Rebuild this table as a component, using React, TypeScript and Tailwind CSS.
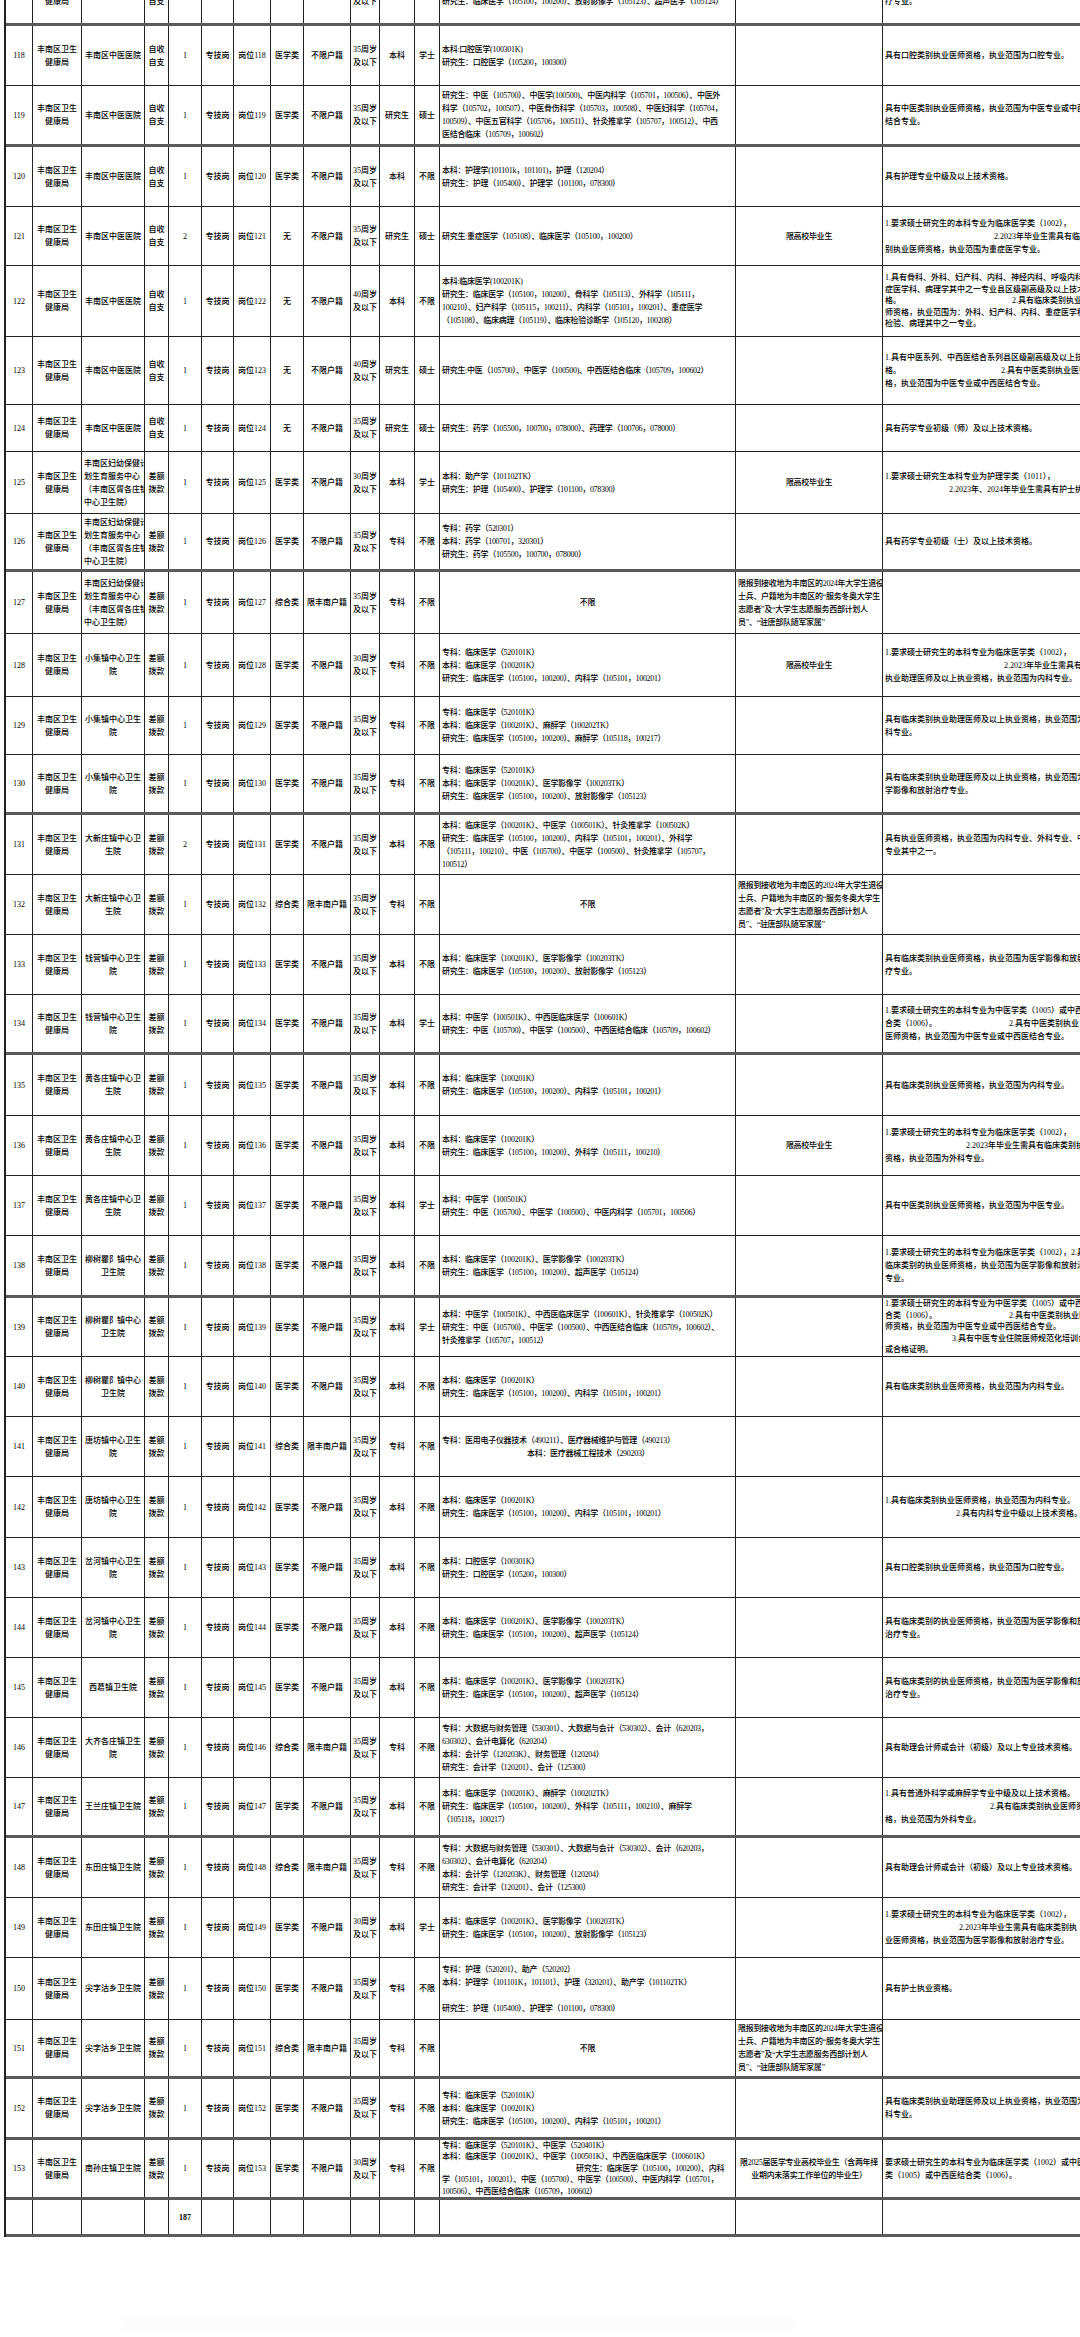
import React from "react";

type Seg = string | { t: string; c: string } | { a: string; g: string; b: string };

type Row = {
  n: string;
  unit: string[];
  unitLeft?: boolean;
  fund: string[];
  cnt?: string;
  name: string;
  cat: string;
  hk: string;
  age: string[];
  edu: string;
  deg: string;
  major: Seg[];
  majorCenter?: boolean;
  other?: Seg[];
  otherCenter?: boolean;
  qual?: Seg[];
  h: string;
  thick?: boolean;
};

const HJ = ["丰南区卫生", "健康局"];
const ZS = ["自收", "自支"];
const CE = ["差额", "拨款"];
const A35 = ["35周岁", "及以下"];
const A30 = ["30周岁", "及以下"];
const A40 = ["40周岁", "及以下"];
const ZYY = ["丰南区中医医院"];
const FY = ["丰南区妇幼保健计", "划生育服务中心", "（丰南区胥各庄镇", "中心卫生院）"];
const XJ = ["小集镇中心卫生", "院"];
const DX = ["大新庄镇中心卫", "生院"];
const QY = ["钱营镇中心卫生", "院"];
const HG = ["黄各庄镇中心卫", "生院"];
const LS = ["柳树瞿阝镇中心", "卫生院"];
const TF = ["唐坊镇中心卫生", "院"];
const CH = ["岔河镇中心卫生", "院"];
const JZ = ["尖字沽乡卫生院"];
const DT = ["东田庄镇卫生院"];
const GX = "限高校毕业生";
const VET: Seg[] = [
  "限报到接收地为丰南区的2024年大学生退役",
  "士兵、户籍地为丰南区的“服务冬奥大学生",
  "志愿者”及“大学生志愿服务西部计划人",
  "员”、“驻唐部队随军家属”",
];
const ACC: Seg[] = [
  "专科：大数据与财务管理（530301）、大数据与会计（530302）、会计（620203，",
  "630302）、会计电算化（620204）",
  "本科：会计学（120203K）、财务管理（120204）",
  "研究生：会计学（120201）、会计（125300）",
];

const rows: Row[] = [
  {
    n: "117", unit: ZYY, fund: ZS, name: "岗位117", cat: "医学类", hk: "不限户籍", age: A35, edu: "本科", deg: "不限",
    major: ["本科：临床医学（100201K）、医学影像学（100203TK）", "研究生：临床医学（105100，100200）、放射影像学（105123）、超声医学（105124）"],
    qual: ["具有临床类别执业医师资格，执业范围为医学影像和放射治", "疗专业。"], h: "h-[60px]", thick: true,
  },
  {
    n: "118", unit: ZYY, fund: ZS, name: "岗位118", cat: "医学类", hk: "不限户籍", age: A35, edu: "本科", deg: "学士",
    major: ["本科:口腔医学(100301K)", "研究生：口腔医学（105200，100300）"],
    qual: ["具有口腔类别执业医师资格，执业范围为口腔专业。"], h: "h-[60px]",
  },
  {
    n: "119", unit: ZYY, fund: ZS, name: "岗位119", cat: "医学类", hk: "不限户籍", age: A35, edu: "研究生", deg: "硕士",
    major: [
      "研究生：中医（105700）、中医学(100500)、中医内科学（105701，100506）、中医外",
      "科学（105702，100507）、中医骨伤科学（105703，100508）、中医妇科学（105704，",
      "100509）、中医五官科学（105706，100511）、针灸推拿学（105707，100512）、中西",
      "医结合临床（105709，100602）",
    ],
    qual: ["具有中医类别执业医师资格，执业范围为中医专业或中西医", "结合专业。"], h: "h-[61px]", thick: true,
  },
  {
    n: "120", unit: ZYY, fund: ZS, name: "岗位120", cat: "医学类", hk: "不限户籍", age: A35, edu: "本科", deg: "不限",
    major: ["本科：护理学(101101k，101101)，护理（120204）", "研究生：护理（105400）、护理学（101100，078300）"],
    qual: ["具有护理专业中级及以上技术资格。"], h: "h-[60px]",
  },
  {
    n: "121", unit: ZYY, fund: ZS, cnt: "2", name: "岗位121", cat: "无", hk: "不限户籍", age: A35, edu: "研究生", deg: "硕士",
    major: ["研究生:重症医学（105108）、临床医学（105100，100200）"], other: [GX], otherCenter: true,
    qual: ["1.要求硕士研究生的本科专业为临床医学类（1002），", { t: "2.2023年毕业生需具有临床类", c: "pl-[109px]" }, "别执业医师资格，执业范围为重症医学专业。"],
    h: "h-[59px]",
  },
  {
    n: "122", unit: ZYY, fund: ZS, name: "岗位122", cat: "无", hk: "不限户籍", age: A40, edu: "本科", deg: "不限",
    major: [
      "本科:临床医学(100201K)",
      "研究生：临床医学（105100，100200）、骨科学（105113）、外科学（105111，",
      "100210）、妇产科学（105115，100211）、内科学（105101，100201）、重症医学",
      "（105108）、临床病理（105119）、临床检验诊断学（105120，100208）",
    ],
    qual: [
      "1.具有骨科、外科、妇产科、内科、神经内科、呼吸内科、重",
      "症医学科、病理学其中之一专业县区级副高级及以上技术资",
      { a: "格。", g: "w-[111px]", b: "2.具有临床类别执业医" },
      "师资格，执业范围为：外科、妇产科、内科、重症医学科、医学",
      "检验、病理其中之一专业。",
    ],
    h: "h-[71px]",
  },
  {
    n: "123", unit: ZYY, fund: ZS, name: "岗位123", cat: "无", hk: "不限户籍", age: A40, edu: "研究生", deg: "硕士",
    major: ["研究生:中医（105700）、中医学（100500)、中西医结合临床（105709，100602）"],
    qual: [
      "1.具有中医系列、中西医结合系列县区级副高级及以上技术资",
      { a: "格。", g: "w-[100px]", b: "2.具有中医类别执业医师资" },
      "格，执业范围为中医专业或中西医结合专业。",
    ],
    h: "h-[68px]",
  },
  {
    n: "124", unit: ZYY, fund: ZS, name: "岗位124", cat: "无", hk: "不限户籍", age: A35, edu: "研究生", deg: "硕士",
    major: ["研究生：药学（105500，100700，078000）、药理学（100706，078000）"],
    qual: ["具有药学专业初级（师）及以上技术资格。"], h: "h-[47px]",
  },
  {
    n: "125", unit: FY, unitLeft: true, fund: CE, name: "岗位125", cat: "医学类", hk: "不限户籍", age: A30, edu: "本科", deg: "学士",
    major: ["本科：助产学（101102TK）", "研究生：护理（105400）、护理学（101100，078300）"], other: [GX], otherCenter: true,
    qual: ["1.要求硕士研究生本科专业为护理学类（1011），", { t: "2.2023年、2024年毕业生需具有护士执业资格", c: "pl-[64px]" }],
    h: "h-[62px]",
  },
  {
    n: "126", unit: FY, unitLeft: true, fund: CE, name: "岗位126", cat: "医学类", hk: "不限户籍", age: A35, edu: "专科", deg: "不限",
    major: ["专科：药学（520301）", "本科：药学（100701，320301）", "研究生：药学（105500，100700，078000）"],
    qual: ["具有药学专业初级（士）及以上技术资格。"], h: "h-[58px]", thick: true,
  },
  {
    n: "127", unit: FY, unitLeft: true, fund: CE, name: "岗位127", cat: "综合类", hk: "限丰南户籍", age: A35, edu: "专科", deg: "不限",
    major: ["不限"], majorCenter: true, other: VET, h: "h-[62px]",
  },
  {
    n: "128", unit: XJ, fund: CE, name: "岗位128", cat: "医学类", hk: "不限户籍", age: A30, edu: "专科", deg: "不限",
    major: ["专科：临床医学（520101K）", "本科：临床医学（100201K）", "研究生：临床医学（105100，100200）、内科学（105101，100201）"],
    other: [GX], otherCenter: true,
    qual: ["1.要求硕士研究生的本科专业为临床医学类（1002），", { t: "2.2023年毕业生需具有临床类别", c: "pl-[119px]" }, "执业助理医师及以上执业资格，执业范围为内科专业。"],
    h: "h-[63px]",
  },
  {
    n: "129", unit: XJ, fund: CE, name: "岗位129", cat: "医学类", hk: "不限户籍", age: A35, edu: "专科", deg: "不限",
    major: ["专科：临床医学（520101K）", "本科：临床医学（100201K）、麻醉学（100202TK）", "研究生：临床医学（105100，100200）、麻醉学（105118，100217）"],
    qual: ["具有临床类别执业助理医师及以上执业资格，执业范围为外", "科专业。"], h: "h-[58px]",
  },
  {
    n: "130", unit: XJ, fund: CE, name: "岗位130", cat: "医学类", hk: "不限户籍", age: A35, edu: "专科", deg: "不限",
    major: ["专科：临床医学（520101K）", "本科：临床医学（100201K）、医学影像学（100203TK）", "研究生：临床医学（105100，100200）、放射影像学（105123）"],
    qual: ["具有临床类别执业助理医师及以上执业资格，执业范围为医", "学影像和放射治疗专业。"], h: "h-[60px]", thick: true,
  },
  {
    n: "131", unit: DX, fund: CE, cnt: "2", name: "岗位131", cat: "医学类", hk: "不限户籍", age: A35, edu: "本科", deg: "不限",
    major: [
      "本科：临床医学（100201K）、中医学（100501K）、针灸推拿学（100502K）",
      "研究生：临床医学（105100，100200）、内科学（105101，100201）、外科学",
      "（105111，100210）、中医（105700）、中医学（100500）、针灸推拿学（105707，",
      "100512）",
    ],
    qual: ["具有执业医师资格，执业范围为内科专业、外科专业、中医", "专业其中之一。"], h: "h-[60px]",
  },
  {
    n: "132", unit: DX, fund: CE, name: "岗位132", cat: "综合类", hk: "限丰南户籍", age: A35, edu: "专科", deg: "不限",
    major: ["不限"], majorCenter: true, other: VET, h: "h-[60px]",
  },
  {
    n: "133", unit: QY, fund: CE, name: "岗位133", cat: "医学类", hk: "不限户籍", age: A35, edu: "本科", deg: "不限",
    major: ["本科：临床医学（100201K）、医学影像学（100203TK）", "研究生：临床医学（105100，100200）、放射影像学（105123）"],
    qual: ["具有临床类别执业医师资格，执业范围为医学影像和放射治", "疗专业。"], h: "h-[60px]",
  },
  {
    n: "134", unit: QY, fund: CE, name: "岗位134", cat: "医学类", hk: "不限户籍", age: A35, edu: "本科", deg: "学士",
    major: ["本科：中医学（100501K）、中西医临床医学（100601K）", "研究生：中医（105700）、中医学（100500）、中西医结合临床（105709，100602）"],
    qual: [
      "1.要求硕士研究生的本科专业为中医学类（1005）或中西医结",
      { a: "合类（1006）。", g: "w-[72px]", b: "2.具有中医类别执业" },
      "医师资格，执业范围为中医专业或中西医结合专业。",
    ],
    h: "h-[60px]", thick: true,
  },
  {
    n: "135", unit: HG, fund: CE, name: "岗位135", cat: "医学类", hk: "不限户籍", age: A35, edu: "本科", deg: "不限",
    major: ["本科：临床医学（100201K）", "研究生：临床医学（105100，100200）、内科学（105101，100201）"],
    qual: ["具有临床类别执业医师资格，执业范围为内科专业。"], h: "h-[61px]",
  },
  {
    n: "136", unit: HG, fund: CE, name: "岗位136", cat: "医学类", hk: "不限户籍", age: A35, edu: "本科", deg: "不限",
    major: ["本科：临床医学（100201K）", "研究生：临床医学（105100，100200）、外科学（105111，100210）"],
    other: [GX], otherCenter: true,
    qual: ["1.要求硕士研究生的本科专业为临床医学类（1002），", { t: "2.2023年毕业生需具有临床类别执业医师", c: "pl-[81px]" }, "资格，执业范围为外科专业。"],
    h: "h-[60px]",
  },
  {
    n: "137", unit: HG, fund: CE, name: "岗位137", cat: "医学类", hk: "不限户籍", age: A35, edu: "本科", deg: "学士",
    major: ["本科：中医学（100501K）", "研究生：中医（105700）、中医学（100500）、中医内科学（105701，100506）"],
    qual: ["具有中医类别执业医师资格，执业范围为中医专业。"], h: "h-[60px]",
  },
  {
    n: "138", unit: LS, fund: CE, name: "岗位138", cat: "医学类", hk: "不限户籍", age: A35, edu: "本科", deg: "不限",
    major: ["本科：临床医学（100201K）、医学影像学（100203TK）", "研究生：临床医学（105100，100200）、超声医学（105124）"],
    qual: ["1.要求硕士研究生的本科专业为临床医学类（1002），2.具有", "临床类别的执业医师资格，执业范围为医学影像和放射治疗", "专业。"],
    h: "h-[62px]", thick: true,
  },
  {
    n: "139", unit: LS, fund: CE, name: "岗位139", cat: "医学类", hk: "不限户籍", age: A35, edu: "本科", deg: "学士",
    major: [
      "本科：中医学（100501K）、中西医临床医学（100601K）、针灸推拿学（100502K）",
      "研究生：中医（105700）、中医学（100500）、中西医结合临床（105709，100602）、",
      "针灸推拿学（105707，100512）",
    ],
    qual: [
      "1.要求硕士研究生的本科专业为中医学类（1005）或中西医结",
      { a: "合类（1006）。", g: "w-[72px]", b: "2.具有中医类别执业医" },
      "师资格，执业范围为中医专业或中西医结合专业。",
      { t: "3.具有中医专业住院医师规范化培训合格证", c: "pl-[67px]" },
      "或合格证明。",
    ],
    h: "h-[59px]",
  },
  {
    n: "140", unit: LS, fund: CE, name: "岗位140", cat: "医学类", hk: "不限户籍", age: A35, edu: "本科", deg: "不限",
    major: ["本科：临床医学（100201K）", "研究生：临床医学（105100，100200）、内科学（105101，100201）"],
    qual: ["具有临床类别执业医师资格，执业范围为内科专业。"], h: "h-[60px]",
  },
  {
    n: "141", unit: TF, fund: CE, name: "岗位141", cat: "综合类", hk: "限丰南户籍", age: A35, edu: "专科", deg: "不限",
    major: ["专科：医用电子仪器技术（490211）、医疗器械维护与管理（490213）", { t: "本科：医疗器械工程技术（290203）", c: "pl-[85px]" }],
    h: "h-[60px]",
  },
  {
    n: "142", unit: TF, fund: CE, name: "岗位142", cat: "医学类", hk: "不限户籍", age: A35, edu: "本科", deg: "不限",
    major: ["本科：临床医学（100201K）", "研究生：临床医学（105100，100200）、内科学（105101，100201）"],
    qual: ["1.具有临床类别执业医师资格，执业范围为内科专业。", { t: "2.具有内科专业中级以上技术资格。", c: "pl-[71px]" }],
    h: "h-[61px]",
  },
  {
    n: "143", unit: CH, fund: CE, name: "岗位143", cat: "医学类", hk: "不限户籍", age: A35, edu: "本科", deg: "不限",
    major: ["本科：口腔医学（100301K）", "研究生：口腔医学（105200，100300）"],
    qual: ["具有口腔类别执业医师资格，执业范围为口腔专业。"], h: "h-[60px]",
  },
  {
    n: "144", unit: CH, fund: CE, name: "岗位144", cat: "医学类", hk: "不限户籍", age: A35, edu: "本科", deg: "不限",
    major: ["本科：临床医学（100201K）、医学影像学（100203TK）", "研究生：临床医学（105100，100200）、超声医学（105124）"],
    qual: ["具有临床类别的执业医师资格，执业范围为医学影像和放射", "治疗专业。"], h: "h-[60px]",
  },
  {
    n: "145", unit: ["西葛镇卫生院"], fund: CE, name: "岗位145", cat: "医学类", hk: "不限户籍", age: A35, edu: "本科", deg: "不限",
    major: ["本科：临床医学（100201K）、医学影像学（100203TK）", "研究生：临床医学（105100，100200）、超声医学（105124）"],
    qual: ["具有临床类别的执业医师资格，执业范围为医学影像和放射", "治疗专业。"], h: "h-[60px]",
  },
  {
    n: "146", unit: ["大齐各庄镇卫生", "院"], fund: CE, name: "岗位146", cat: "综合类", hk: "限丰南户籍", age: A35, edu: "专科", deg: "不限",
    major: ACC, qual: ["具有助理会计师或会计（初级）及以上专业技术资格。"], h: "h-[60px]",
  },
  {
    n: "147", unit: ["王兰庄镇卫生院"], fund: CE, name: "岗位147", cat: "医学类", hk: "不限户籍", age: A35, edu: "本科", deg: "不限",
    major: ["本科：临床医学（100201K）、麻醉学（100202TK）", "研究生：临床医学（105100，100200）、外科学（105111，100210）、麻醉学", "（105118，100217）"],
    qual: ["1.具有普通外科学或麻醉学专业中级及以上技术资格。", { t: "2.具有临床类别执业医师资", c: "pl-[105px]" }, "格，执业范围为外科专业。"],
    h: "h-[60px]", thick: true,
  },
  {
    n: "148", unit: DT, fund: CE, name: "岗位148", cat: "综合类", hk: "限丰南户籍", age: A35, edu: "专科", deg: "不限",
    major: ACC, qual: ["具有助理会计师或会计（初级）及以上专业技术资格。"], h: "h-[60px]",
  },
  {
    n: "149", unit: DT, fund: CE, name: "岗位149", cat: "医学类", hk: "不限户籍", age: A30, edu: "本科", deg: "学士",
    major: ["本科：临床医学（100201K）、医学影像学（100203TK）", "研究生：临床医学（105100，100200）、放射影像学（105123）"],
    qual: ["1.要求硕士研究生的本科专业为临床医学类（1002），", { t: "2.2023年毕业生需具有临床类别执", c: "pl-[74px]" }, "业医师资格，执业范围为医学影像和放射治疗专业。"],
    h: "h-[60px]",
  },
  {
    n: "150", unit: JZ, fund: CE, name: "岗位150", cat: "医学类", hk: "不限户籍", age: A35, edu: "专科", deg: "不限",
    major: ["专科：护理（520201）、助产（520202）", "本科：护理学（101101K，101101）、护理（320201）、助产学（101102TK）", "", "研究生：护理（105400）、护理学（101100，078300）"],
    qual: ["具有护士执业资格。"], h: "h-[62px]",
  },
  {
    n: "151", unit: JZ, fund: CE, name: "岗位151", cat: "综合类", hk: "限丰南户籍", age: A35, edu: "专科", deg: "不限",
    major: ["不限"], majorCenter: true, other: VET, h: "h-[59px]", thick: true,
  },
  {
    n: "152", unit: JZ, fund: CE, name: "岗位152", cat: "医学类", hk: "不限户籍", age: A35, edu: "专科", deg: "不限",
    major: ["专科：临床医学（520101K）", "本科：临床医学（100201K）", "研究生：临床医学（105100，100200）、内科学（105101，100201）"],
    qual: ["具有临床类别执业助理医师及以上执业资格，执业范围为内", "科专业。"], h: "h-[61px]", thick: true,
  },
  {
    n: "153", unit: ["南孙庄镇卫生院"], fund: CE, name: "岗位153", cat: "医学类", hk: "不限户籍", age: A30, edu: "专科", deg: "不限",
    major: [
      "专科：临床医学（520101K）、中医学（520401K）",
      "本科：临床医学（100201K）、中医学（100501K）、中西医临床医学（100601K）",
      { t: "研究生：临床医学（105100，100200）、内科", c: "pl-[134px]" },
      "学（105101，100201）、中医（105700）、中医学（100500）、中医内科学（105701，",
      "100506）、中西医结合临床（105709，100602）",
    ],
    other: ["限2025届医学专业高校毕业生（含两年择", "业期内未落实工作单位的毕业生）"], otherCenter: true,
    qual: ["要求硕士研究生的本科专业为临床医学类（1002）或中医学", "类（1005）或中西医结合类（1006）。"],
    h: "h-[60px]", thick: true,
  },
];

function Line({ s }: { s: Seg }) {
  if (typeof s === "string") return <div className="whitespace-nowrap">{s === "" ? "\u00a0" : s}</div>;
  if ("t" in s) return <div className={"whitespace-nowrap " + s.c}>{s.t}</div>;
  return (
    <div className="flex whitespace-nowrap">
      <span>{s.a}</span>
      <span className={"inline-block " + s.g} />
      <span>{s.b}</span>
    </div>
  );
}

function Cell({ lines = [], left = false, tight = false }: { lines?: Seg[]; left?: boolean; tight?: boolean }) {
  const a = left ? "items-start text-left pl-[2px]" : "items-center text-center";
  const t = tight ? "tracking-[-0.3px]" : "";
  const lh = lines.length >= 5 ? "leading-[11.4px]" : "leading-[13px]";
  return (
    <div className={`flex flex-col justify-center overflow-hidden border-r border-[#222] ${a} ${t} ${lh}`}>
      {lines.map((s, i) => (
        <Line key={i} s={s} />
      ))}
    </div>
  );
}

const GRID =
  "grid grid-cols-[27px_49px_63px_24px_33px_32px_37px_33px_47px_29px_35px_25px_296px_147px_300px]";

function TableRow({ r }: { r: Row }) {
  const b = r.thick ? "border-b-[3px] border-b-[#5a5a5a]" : "border-b border-b-[#222]";
  return (
    <div className={`${GRID} ${r.h} ${b}`}>
      <Cell lines={[r.n]} />
      <Cell lines={HJ} />
      <Cell lines={r.unit} left={r.unitLeft} />
      <Cell lines={r.fund} />
      <Cell lines={[r.cnt ?? "1"]} />
      <Cell lines={["专技岗"]} />
      <Cell lines={[r.name]} />
      <Cell lines={[r.cat]} />
      <Cell lines={[r.hk]} />
      <Cell lines={r.age} />
      <Cell lines={[r.edu]} />
      <Cell lines={[r.deg]} />
      <Cell lines={r.major} left={!r.majorCenter} tight />
      <Cell lines={r.other} left={!r.otherCenter} tight />
      <Cell lines={r.qual} left />
    </div>
  );
}

export default function App() {
  return (
    <div className="h-[2337px] w-[1080px] overflow-hidden bg-white font-['Liberation_Serif','Noto_Sans_CJK_SC',serif] text-[8px] font-medium leading-[13px] text-[#000]">
      <div className="-mt-[34px] ml-[4px] w-[1180px] border-l-2 border-l-[#222]">
        {rows.map((r) => (
          <TableRow key={r.n} r={r} />
        ))}
        <div className={`${GRID} h-[37px] border-b-[3px] border-b-[#5a5a5a]`}>
          <Cell />
          <Cell />
          <Cell />
          <Cell />
          <div className="flex items-center justify-center border-r border-[#222] font-bold">187</div>
          <Cell />
          <Cell />
          <Cell />
          <Cell />
          <Cell />
          <Cell />
          <Cell />
          <Cell />
          <Cell />
          <Cell />
        </div>
      </div>
      <div className="ml-[122px] mt-[82px] h-[10px] w-[672px] bg-[#fbfbfb] blur-[3px]" />
    </div>
  );
}
